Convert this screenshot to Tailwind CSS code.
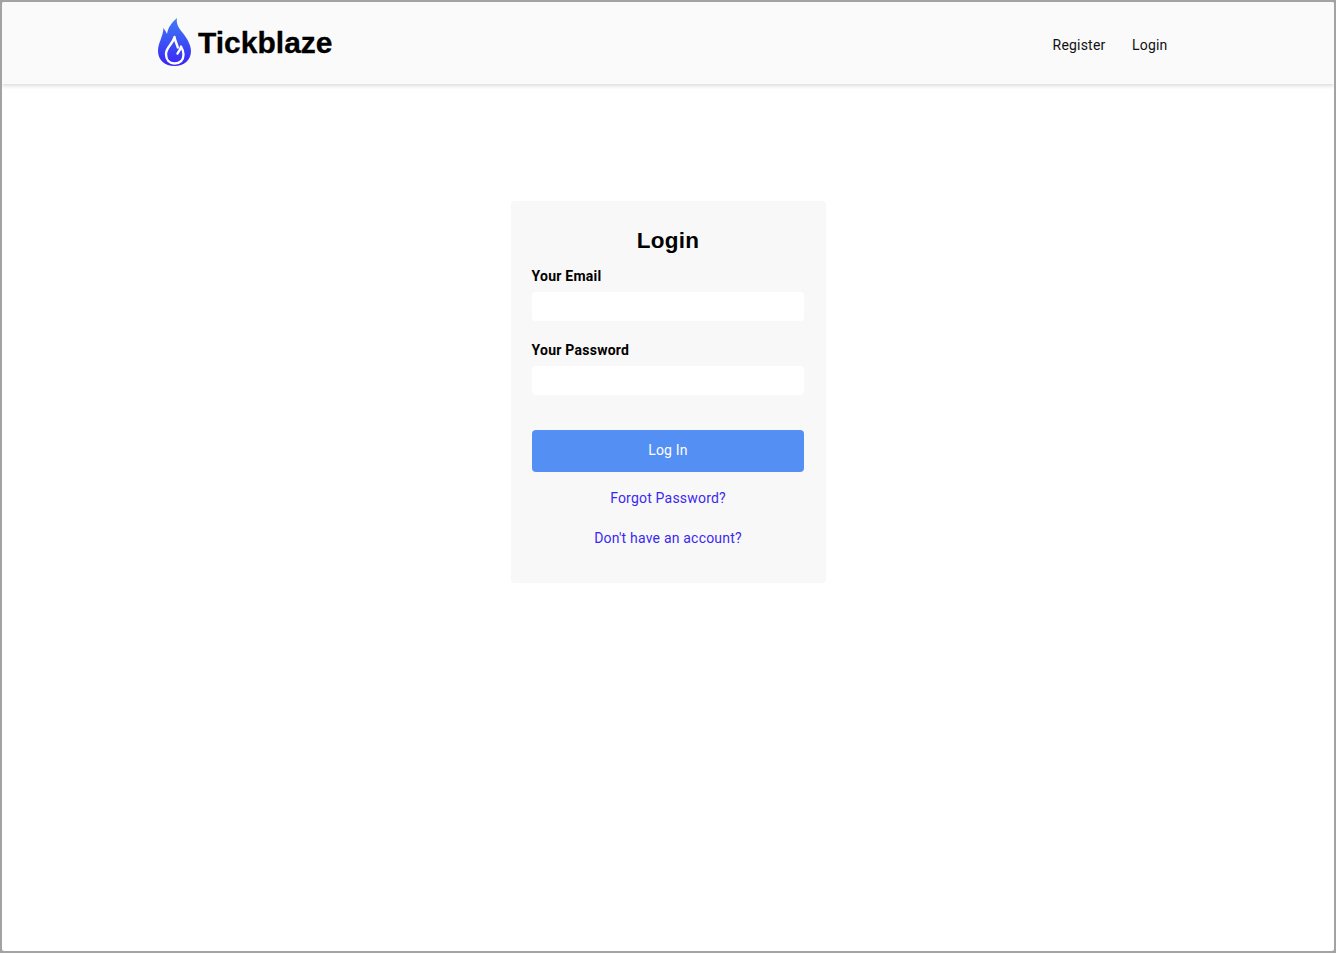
<!DOCTYPE html>
<html lang="en">
<head>
<meta charset="utf-8">
<title>Tickblaze Login</title>
<script src="https://cdn.jsdelivr.net/npm/@tailwindcss/browser@4"></script>
</head>
<body class="bg-[#a3a3a3] font-['Roboto',sans-serif]">
<div class="h-[953px] w-[1336px] border-2 border-[#a3a3a3] bg-white rounded-[4px] overflow-hidden">
  <header class="h-[82px] bg-[#fafafa] shadow-[0_2px_4px_rgba(0,0,0,0.14)] pl-[156px] pr-[166.500px] flex justify-between">
    <a href="#" class="flex items-start pt-[16px] gap-[7px]">
      <svg class="w-[33px] h-[48px]" viewBox="0 0 33 48">
        <defs>
          <linearGradient id="flame" x1="0" y1="0" x2="0" y2="1">
            <stop offset="0" stop-color="#3f7cf6"/>
            <stop offset="1" stop-color="#3a25f5"/>
          </linearGradient>
        </defs>
        <path fill="url(#flame)" d="M19 0C18 5 20 9 24 14C29 20 33 27 33 33C33 42 26 48 16.500 48C7 48 0 42 0 33C0 25 5 19 5.500 10C7 12 8 14 9 16C10 10 13 5 19 0Z"/>
        <path fill="none" stroke="#fff" stroke-width="2.400" stroke-linecap="round" stroke-linejoin="round" d="M16.500 19C15 26 8 29 8 36C8 42 11.500 45.500 16.500 45.500C22 45.500 25.500 42 25.500 36.500C25.500 33 24.500 31 23 28.500C22.500 31.500 21.500 33 19.500 35.500M16.500 19C17 23 19 26 19.800 29.500"/>
      </svg>
      <span class="font-['Liberation_Sans',sans-serif] font-bold text-[30px] leading-[36px] text-black mt-[6.500px] [-webkit-text-stroke:0.3px_#000]">Tickblaze</span>
    </a>
    <nav class="flex items-start pt-[34px] gap-[26.500px] text-[14px] leading-[18px] tracking-[0.2px] text-[#111]">
      <a href="#">Register</a>
      <a href="#">Login</a>
    </nav>
  </header>
  <main class="flex justify-center pt-[117px]">
    <div class="w-[315px] h-[382px] bg-[#f8f8f8] rounded-[4px] pl-[21px] pr-[22px] pt-[25px]">
      <h1 class="font-['Liberation_Sans',sans-serif] font-bold text-[22.500px] leading-[29px] tracking-[0.3px] text-center text-black translate-x-[0.5px]">Login</h1>
      <form>
        <label class="block font-bold text-[14px] leading-[18px] tracking-[0.25px] text-black mt-[12px]">Your Email</label>
        <input type="email" class="block w-full h-[29px] mt-[7px] bg-white rounded-[4px]">
        <label class="block font-bold text-[14px] leading-[18px] tracking-[0.25px] text-black mt-[20px]">Your Password</label>
        <input type="password" class="block w-full h-[29px] mt-[7px] bg-white rounded-[4px]">
        <button type="button" class="block w-full h-[42px] mt-[35px] pb-[2px] pl-[1px] bg-[#5490f4] text-white text-[14px] tracking-[0.2px] rounded-[4px]">Log In</button>
      </form>
      <a href="#" class="block text-center text-[14px] leading-[18px] tracking-[0.2px] text-[#3b28f0] mt-[17px] translate-x-[0.5px]">Forgot Password?</a>
      <a href="#" class="block text-center text-[14px] leading-[18px] tracking-[0.2px] text-[#3b28f0] mt-[22px] translate-x-[0.5px]">Don't have an account?</a>
    </div>
  </main>
</div>
</body>
</html>
